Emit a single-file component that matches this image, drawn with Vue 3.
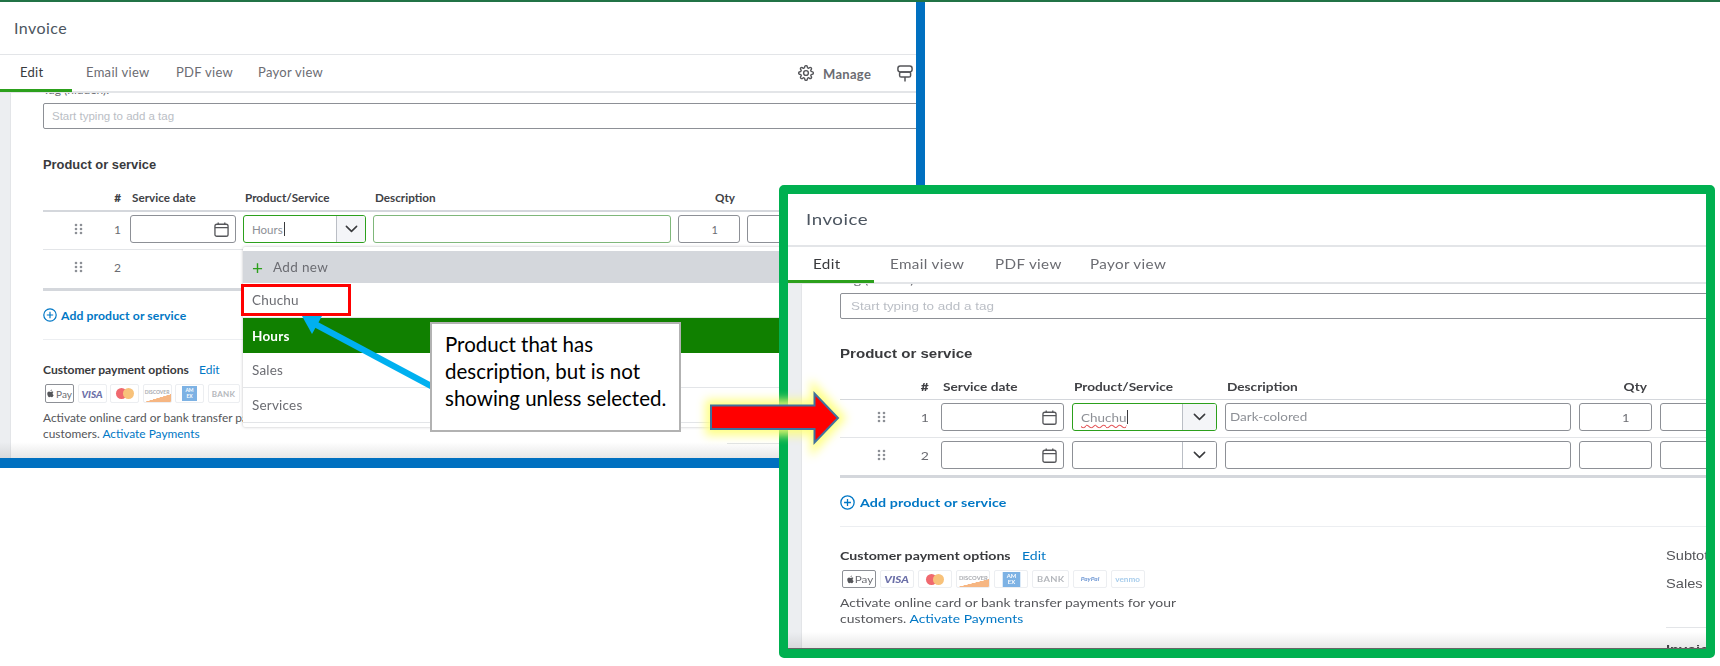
<script setup>
const tabs = ['Edit', 'Email view', 'PDF view', 'Payor view']
const pays = [
  { k: 'apple', t: 'Pay' },
  { k: 'visa', t: 'VISA' },
  { k: 'mc', t: '' },
  { k: 'disc', t: 'DISCOVER' },
  { k: 'amex', t: 'AM EX' },
  { k: 'bank', t: 'BANK' },
  { k: 'paypal', t: 'PayPal' },
  { k: 'venmo', t: 'venmo' }
]
const windows = [
  {
    id: 'win-left', manage: true, dropdown: true,
    rows: [
      { n: 1, inputs: true, focus: true, product: 'Hours', desc: '', qty: '1', descActive: true },
      { n: 2, inputs: false }
    ]
  },
  {
    id: 'win-right', manage: false, dropdown: false,
    rows: [
      { n: 1, inputs: true, focus: true, product: 'Chuchu', squiggle: true, desc: 'Dark-colored', qty: '1' },
      { n: 2, inputs: true, product: '', desc: '', qty: '' }
    ]
  }
]
const menu = ['Chuchu', 'Hours', 'Sales', 'Services']
</script>

<template>
  <div class="canvas">
    <div class="topbar"></div>

    <section v-for="w in windows" :key="w.id" class="frame" :class="w.id">
      <div class="win">
        <header class="title"><span class="tx">Invoice</span></header>
        <nav class="tabs">
          <div v-for="(t, i) in tabs" :key="t" class="tab" :class="{ active: i === 0 }"><span class="tx">{{ t }}</span></div>
          <div v-if="w.manage" class="tools">
            <svg class="gear" viewBox="0 0 24 24" fill="none" stroke="#55565a" stroke-width="2.1"><circle cx="12" cy="12" r="3.6"/><path d="M19.4 15a1.65 1.65 0 0 0 .33 1.82l.06.06a2 2 0 0 1 0 2.83 2 2 0 0 1-2.83 0l-.06-.06a1.65 1.65 0 0 0-1.82-.33 1.65 1.65 0 0 0-1 1.51V21a2 2 0 0 1-2 2 2 2 0 0 1-2-2v-.09A1.65 1.65 0 0 0 9 19.4a1.65 1.65 0 0 0-1.82.33l-.06.06a2 2 0 0 1-2.83 0 2 2 0 0 1 0-2.83l.06-.06a1.65 1.65 0 0 0 .33-1.82 1.65 1.65 0 0 0-1.51-1H3a2 2 0 0 1-2-2 2 2 0 0 1 2-2h.09A1.65 1.65 0 0 0 4.6 9a1.65 1.65 0 0 0-.33-1.82l-.06-.06a2 2 0 0 1 0-2.83 2 2 0 0 1 2.83 0l.06.06a1.65 1.65 0 0 0 1.82.33H9a1.65 1.65 0 0 0 1-1.51V3a2 2 0 0 1 2-2 2 2 0 0 1 2 2v.09a1.65 1.65 0 0 0 1 1.51 1.65 1.65 0 0 0 1.82-.33l.06-.06a2 2 0 0 1 2.83 0 2 2 0 0 1 0 2.83l-.06.06a1.65 1.65 0 0 0-.33 1.82V9a1.65 1.65 0 0 0 1.51 1H21a2 2 0 0 1 2 2 2 2 0 0 1-2 2h-.09a1.65 1.65 0 0 0-1.51 1z"/></svg>
            <span class="manage">Manage</span>
            <svg class="sign" viewBox="0 0 16 17" fill="none" stroke="#55565a" stroke-width="1.5" stroke-linejoin="round"><rect x=".9" y="1" width="14.200" height="6" rx="2.400"/><rect x="2.600" y="7" width="11" height="5" rx="1.600"/><path d="M8 12v4.600"/></svg>
          </div>
        </nav>

        <div class="body">
          <aside class="rail"></aside>
          <main class="main">
            <div class="tag-label"><span class="tx">Tag (hidden):</span></div>
            <div class="tag-input"><span class="tx">Start typing to add a tag</span></div>
            <h2 class="heading"><span class="tx">Product or service</span></h2>

            <div class="grid head">
              <div class="lead"><span class="handle"></span><b class="num"><span class="tx tx-r">#</span></b></div>
              <div class="hcell"><span class="tx">Service date</span></div>
              <div class="hcell"><span class="tx">Product/Service</span></div>
              <div class="hcell"><span class="tx">Description</span></div>
              <div class="hcell hqty"><span class="tx tx-r">Qty</span></div>
            </div>

            <div v-for="r in w.rows" :key="r.n" class="grid row" :class="{ 'row-first': r.n === 1, 'row-plain': !r.inputs }">
              <div class="lead">
                <span class="handle"><svg class="dots" viewBox="0 0 7 10" fill="#8d9096"><circle v-for="d in [[1,1],[6,1],[1,5],[6,5],[1,9],[6,9]]" :key="d.join()" :cx="d[0]" :cy="d[1]" r="1.300"/></svg></span>
                <span class="num"><span class="tx tx-r">{{ r.n }}</span></span>
              </div>
              <template v-if="r.inputs">
                <div class="field date">
                  <svg class="cal" viewBox="0 0 16 16" fill="none" stroke="#55565a" stroke-width="1.4"><rect x="1" y="2.4" width="14" height="12.8" rx="2"/><path d="M1 6h14M4.5.6v2.6M11.5.6v2.6"/></svg>
                </div>
                <div class="field product" :class="{ focus: r.focus }">
                  <div class="value"><span class="tx" :class="{ squiggle: r.squiggle }">{{ r.product }}</span><i v-if="r.focus" class="caret"></i></div>
                  <div class="drop"><svg viewBox="0 0 14 8" fill="none" stroke="#393a3d" stroke-width="1.7" stroke-linecap="round" stroke-linejoin="round"><path d="M1.5 1.2 7 6.5l5.5-5.3"/></svg></div>
                </div>
                <div class="field desc" :class="{ soft: r.descActive }"><span class="tx">{{ r.desc }}</span></div>
                <div class="field qty"><span class="tx tx-r">{{ r.qty }}</span></div>
                <div class="field"></div>
              </template>
            </div>
            <div class="table-end"></div>

            <a class="add">
              <svg viewBox="0 0 14 14" fill="none" stroke="#0077c5" stroke-width="1.2"><circle cx="7" cy="7" r="6.2"/><path d="M7 3.8v6.4M3.8 7h6.4"/></svg>
              <span class="tx">Add product or service</span>
            </a>
            <hr class="sep" />

            <div class="pay-section">
              <div class="pay-left">
                <div class="pay-title"><div class="ptxt"><b class="tx">Customer payment options</b></div><a class="edit"><span class="tx">Edit</span></a></div>
                <div class="pay-row">
                  <div v-for="p in pays" :key="p.k" class="pay" :class="p.k">
                    <svg v-if="p.k === 'apple'" class="apple-logo" viewBox="0 0 10 12" fill="#55565a"><path d="M7.4 3.2c-1 0-1.5.6-2.3.6S3.800 3.200 2.900 3.200C1.600 3.200.4 4.300.4 6.300c0 2.300 1.600 5 2.800 5 .7 0 1.100-.5 1.900-.5s1.100.5 1.900.5c1.100 0 2.100-1.900 2.500-3.100-1.900-.8-2-3.600-.3-4.500-.6-.4-1.200-.5-1.800-.5zM7 .2c-1 .1-2 1-1.900 2.300C6.200 2.500 7.100 1.400 7 .2z"/></svg>
                    <template v-if="p.k === 'mc'"><i class="mc-a"></i><i class="mc-b"></i></template>
                    <i v-if="p.k === 'disc'" class="wedge"></i>
                    <span v-if="p.t" class="pay-t">{{ p.t }}</span>
                  </div>
                </div>
                <p class="activate"><span class="tx line">Activate online card or bank transfer payments for your</span><span class="tx line">customers. <a class="link">Activate Payments</a></span></p>
              </div>
              <div class="totals">
                <div class="tot"><span class="tx arial">Subtotal</span></div>
                <div class="tot tot2"><span class="tx arial">Sales tax</span></div>
                <hr class="tot-line" />
                <div class="tot inv"><b class="tx arial">Invoice total</b></div>
              </div>
            </div>
          </main>
        </div>

        <div v-if="w.dropdown" class="dropdown">
          <div class="add-new"><span class="plus">+</span>Add new</div>
          <div v-for="m in menu" :key="m" class="opt" :class="{ sel: m === 'Hours' }">{{ m }}</div>
        </div>
      </div>
    </section>

    <svg class="blue-arrow" viewBox="0 0 140 80" fill="#00b0f0"><path d="M130 70.500 11 7" stroke="#00b0f0" stroke-width="6.500"/><path d="M0 0h20L10 18z"/></svg>
    <div class="red-box"></div>
    <div class="callout">Product that has description, but is not showing unless selected.</div>

    <svg class="red-arrow" viewBox="0 0 160 90">
      <defs><filter id="glow" x="-30%" y="-50%" width="160%" height="200%"><feGaussianBlur stdDeviation="5"/></filter></defs>
      <path d="M17 27h105V15l23 25-23 25V52H17z" fill="#ffff70" stroke="#ffff70" stroke-width="11" filter="url(#glow)" opacity=".85"/>
      <path d="M17 27.500h103.500V15.500l23.500 24.500-23.500 24.500V51H17z" fill="#ff0000" stroke="#41719c" stroke-width="2"/>
    </svg>
  </div>
</template>

<style scoped>
.canvas { position: relative; width: 1720px; height: 666px; overflow: hidden; background: #fff; font-family: Lato, "Noto Sans", sans-serif; color: #393a3d; }
.topbar { height: 2px; background: #217346; }
* { box-sizing: border-box; }

.frame { position: absolute; }
.win { position: relative; width: 100%; height: 100%; overflow: hidden; background: #fff; filter: blur(.3px); }
.win::after { content: ""; position: absolute; left: 0; right: 0; bottom: 0; height: 16px; background: linear-gradient(rgba(120,120,120,0), rgba(120,120,120,.18)); pointer-events: none; }

.win-left {
  left: 0; top: 2px; width: 925px; height: 466px; border-right: 9px solid #0070c0; border-bottom: 10px solid #0070c0;
  --sx: 1; --title-h: 52px; --title-b: 1px; --title-pad: 14px; --title-fs: 16px;
  --tabs-h: 36px; --tabs-b: 2px; --tab-cols: 86px 90px 82px 90px; --edit-w: 72px; --edit-pad: 20px;
  --rail: 11px; --main-pad: 32px; --label-mt: -10px; --heading-mt: 28px; --tag-pad: 8px;
  --cols: 80px 106px 123px 298px 62px 200px; --gap: 7px; --handle: 70px; --num-pr: 2px; --head-line: 2px;
  --row-h: 38px; --tot-left: 684px; --tot-mt: 37px; --pay-w: 29px; --pay-gap: 3.5px; --pay-h: 19px; --pay-mt: 6px; --title-pay: 22px; --line-h: 16px; --qty-pr: 21px; --edit-x: 156px;
}
.win-right {
  left: 779px; top: 185px; width: 936px; height: 473px; border: 9px solid #00b050; border-radius: 5px;
  --sx: 1.17; --title-h: 51px; --title-b: 2px; --title-pad: 18px; --title-fs: 16px;
  --tabs-h: 35px; --tabs-b: 2px; --tab-cols: 102px 105px 95px 100px; --edit-w: 86px; --edit-pad: 25px;
  --rail: 14px; --main-pad: 38px; --label-mt: -11px; --heading-mt: 27px; --tag-pad: 10px;
  --cols: 93px 123px 145px 346px 73px 100px; --gap: 8px; --handle: 82px; --num-pr: 4px; --head-line: 1px;
  --row-h: 38px; --tot-left: 826px; --tot-mt: 35px; --pay-w: 34px; --pay-gap: 4px; --pay-h: 18px; --pay-mt: 6px; --title-pay: 21px; --line-h: 15.500px; --qty-pr: 22px; --edit-x: 182px;
}
.win-right .win { border-bottom: 1px solid #666; }
.win-right .row-first + .row { height: 37px; }

.tx { display: inline-block; white-space: nowrap; transform: scaleX(var(--sx)); transform-origin: left center; }
.tx-r { transform-origin: right center; }
.arial { font-family: "Liberation Sans", Arial, sans-serif; }

.title { height: calc(var(--title-h) + var(--title-b)); border-bottom: var(--title-b) solid #e3e5e8; padding-left: var(--title-pad); display: flex; align-items: center; font-size: var(--title-fs); color: #4c5560; letter-spacing: .45px; padding-bottom: 2px; }

.tabs { position: relative; height: calc(var(--tabs-h) + var(--tabs-b)); border-bottom: var(--tabs-b) solid #e3e5e8; display: grid; grid-template-columns: var(--tab-cols); align-items: center; font-size: 13px; color: #6b6c72; letter-spacing: .3px; padding-bottom: 2px; }
.tab.active { color: #393a3d; padding-left: var(--edit-pad); }
.tab.active::after { content: ""; position: absolute; left: 0; bottom: -1px; width: var(--edit-w); height: 3px; background: #2ca01c; }
.tools { position: absolute; left: 798px; top: 9px; display: flex; align-items: center; height: 18px; color: #6b6c72; }
.gear { width: 16px; height: 16px; margin-right: 9px; }
.manage { font-weight: 700; font-size: 13px; width: 49px; margin-right: 25px; padding-top: 2px; }
.sign { width: 16px; height: 17px; }

.body { display: flex; height: 400px; overflow: hidden; }
.rail { flex: 0 0 var(--rail); background: #eceef1; border-right: 1px solid #e3e5e8; height: 100%; }
.main { flex: 1; min-width: 0; padding-left: var(--main-pad); }

.tag-label { height: 14px; line-height: 14px; margin-top: var(--label-mt); margin-bottom: 6px; font-size: 12px; color: #6b6c72; }
.tag-input { height: 26px; margin-right: -20px; border: 1px solid #8d9096; border-radius: 2px; padding-left: var(--tag-pad); display: flex; align-items: center; font-family: "Liberation Sans", Arial, sans-serif; font-size: 11.500px; color: #babec5; }
.heading { margin: var(--heading-mt) 0 0; height: 16px; line-height: 16px; font-family: "Liberation Sans", Arial, sans-serif; font-size: 12.900px; font-weight: 700; color: #393a3d; }

.grid { display: grid; grid-template-columns: var(--cols); column-gap: var(--gap); margin-right: -100px; }
.head { margin-top: 17px; padding-bottom: 6px; line-height: 14px; font-size: 11.700px; font-weight: 700; color: #404145; border-bottom: var(--head-line) solid #d4d7dc; }
.hcell { padding-left: 2px; }
.hqty { text-align: right; padding-right: 5px; }
.lead { display: flex; align-items: center; height: 28px; }
.head .lead { height: 14px; }
.handle { flex: 0 0 var(--handle); display: flex; justify-content: center; }
.dots { width: 7px; height: 10px; overflow: visible; }
.num { flex: 1; text-align: right; padding-right: var(--num-pr); font-size: 12px; color: #6b6c72; }
.head .num { color: #404145; font-size: 11.700px; }

.row { height: var(--row-h); padding-top: 3px; align-items: start; }
.row-first { border-bottom: 1px solid #e3e5e8; }
.table-end { height: 3px; background: #d4d7dc; }

.field { position: relative; height: 28px; border: 1px solid #8d9096; border-radius: 3px; display: flex; align-items: center; font-size: 11.500px; color: #8d9096; background: #fff; }
.date { justify-content: flex-end; padding-right: 6px; }
.cal { width: 15px; height: 15px; }
.product { align-items: stretch; overflow: hidden; }
.product.focus { border: 1.500px solid #2ca01c; }
.value { flex: 1; display: flex; align-items: center; padding-left: 8px; }
.caret { display: inline-block; width: 1px; height: 14px; background: #393a3d; margin-left: 1px; }
.win-right .caret { margin-left: 7px; }
.drop { flex: 0 0 29px; border-left: 1px solid #babec5; background: #fff; display: flex; align-items: center; justify-content: center; }
.focus .drop { background: #f4f5f8; }
.win-right .drop { flex-basis: 34px; }
.drop svg { width: 13px; height: 8px; }
.desc { padding-left: 4px; padding-bottom: 2px; }
.desc.soft { border-color: #7fb77a; }
.qty { justify-content: flex-end; padding-right: var(--qty-pr); color: #6b6c72; font-size: 11px; }
.squiggle { text-decoration: underline wavy #e4575b 1px; text-underline-offset: 2px; }

.add { margin-top: 16px; height: 16px; display: flex; align-items: center; gap: 4px; color: #0077c5; font-size: 12.200px; font-weight: 700; letter-spacing: .1px; }
.add svg { width: 14px; height: 14px; flex: none; }
.win-right .add { gap: 5px; }
.win-right .add svg { width: 15px; height: 15px; }
.sep { margin: 16px -20px 0 0; border: 0; height: 1px; background: #eceef1; }

.pay-section { position: relative; margin-top: var(--title-pay); display: flex; }
.pay-left { flex: 0 0 var(--tot-left); }
.pay-title { height: 16px; line-height: 16px; display: flex; align-items: center; font-size: 12.100px; color: #393a3d; }
.ptxt { flex: 0 0 var(--edit-x); }
.edit { color: #0077c5; font-size: 12px; }
.pay-row { display: flex; gap: var(--pay-gap); margin: var(--pay-mt) 0 0 2px; height: var(--pay-h); }
.pay { position: relative; flex: 0 0 var(--pay-w); height: var(--pay-h); border: 1px solid #eceef1; border-radius: 2px; display: flex; align-items: center; justify-content: center; overflow: hidden; font-size: 9px; }
.pay-t { white-space: nowrap; display: inline-block; transform: scaleX(var(--sx)); position: relative; }
.apple-logo { width: 7px; height: 9px; flex: none; margin-right: 2px; }
.pay.apple { border: 1px solid #8d9096; color: #6b6c72; font-size: 10px; }
.pay.visa { color: #6b6fa8; font-weight: 900; font-style: italic; font-size: 10px; }
.pay.mc i { width: 11px; height: 11px; border-radius: 50%; display: block; }
.mc-a { background: #f0696f; }
.mc-b { background: #f8c27a; margin-left: -4px; }
.pay.disc { color: #a9abb0; font-size: 5px; font-weight: 700; align-items: flex-start; padding-top: 4px; }
.wedge { position: absolute; right: 0; bottom: 0; width: 100%; height: 8px; background: linear-gradient(to bottom right, transparent 50%, #f6b682 52%); }
.pay.amex .pay-t { background: #7db2e4; color: #fff; font-size: 5px; font-weight: 700; width: 15px; height: 15px; line-height: 6px; text-align: center; white-space: normal; padding-top: 1px; }
.pay.bank { color: #b4b7bc; font-weight: 700; font-size: 8px; letter-spacing: .3px; flex-basis: calc(var(--pay-w) + 3px); }
.pay.paypal { color: #7aa0d8; font-size: 5.500px; font-weight: 900; font-style: italic; }
.pay.venmo { color: #a8cdec; font-size: 7px; font-weight: 700; }

.activate { margin: 7px 0 0; font-size: 11.900px; color: #55565a; line-height: var(--line-h); }
.line { display: block; width: max-content; }
.link { color: #0077c5; }

.totals { flex: 0 0 200px; font-size: 12.500px; color: #55565a; }
.tot { height: 16px; line-height: 16px; }
.tot2 { margin-top: 12px; }
.tot-line { border: 0; height: 1px; background: #e3e5e8; margin: var(--tot-mt) 0 0; }
.inv { margin-top: 14px; color: #393a3d; }

.dropdown { position: absolute; left: 243px; top: 245px; width: 720px; height: 180px; background: #fff; padding-top: 4px; box-shadow: 0 0 3px rgba(60,60,70,.35); border-radius: 2px; font-size: 13.500px; color: #6b6c72; }
.add-new { height: 32px; background: #d4d7dc; display: flex; align-items: center; padding-left: 9px; letter-spacing: .35px; }
.plus { color: #2ca01c; font-size: 19px; width: 21px; line-height: 1; font-weight: 400; }
.opt { height: 35px; display: flex; align-items: center; padding-left: 9px; border-bottom: 1px solid #e3e5e8; letter-spacing: .2px; }
.opt.sel { background: #108000; color: #fff; font-weight: 700; border-bottom: 0; }

.blue-arrow { position: absolute; left: 302px; top: 316px; width: 140px; height: 80px; overflow: visible; }
.red-box { position: absolute; left: 241px; top: 284px; width: 110px; height: 32px; border: 3px solid #f00; }
.callout { position: absolute; left: 430px; top: 322px; width: 251px; height: 110px; padding: 7px 8px 0 13px; background: #fff; border: 2px solid #b2b2b2; font-family: Lato, sans-serif; font-size: 20.500px; line-height: 27px; color: #000; }
.red-arrow { position: absolute; left: 694px; top: 378px; width: 160px; height: 90px; overflow: visible; }
</style>
